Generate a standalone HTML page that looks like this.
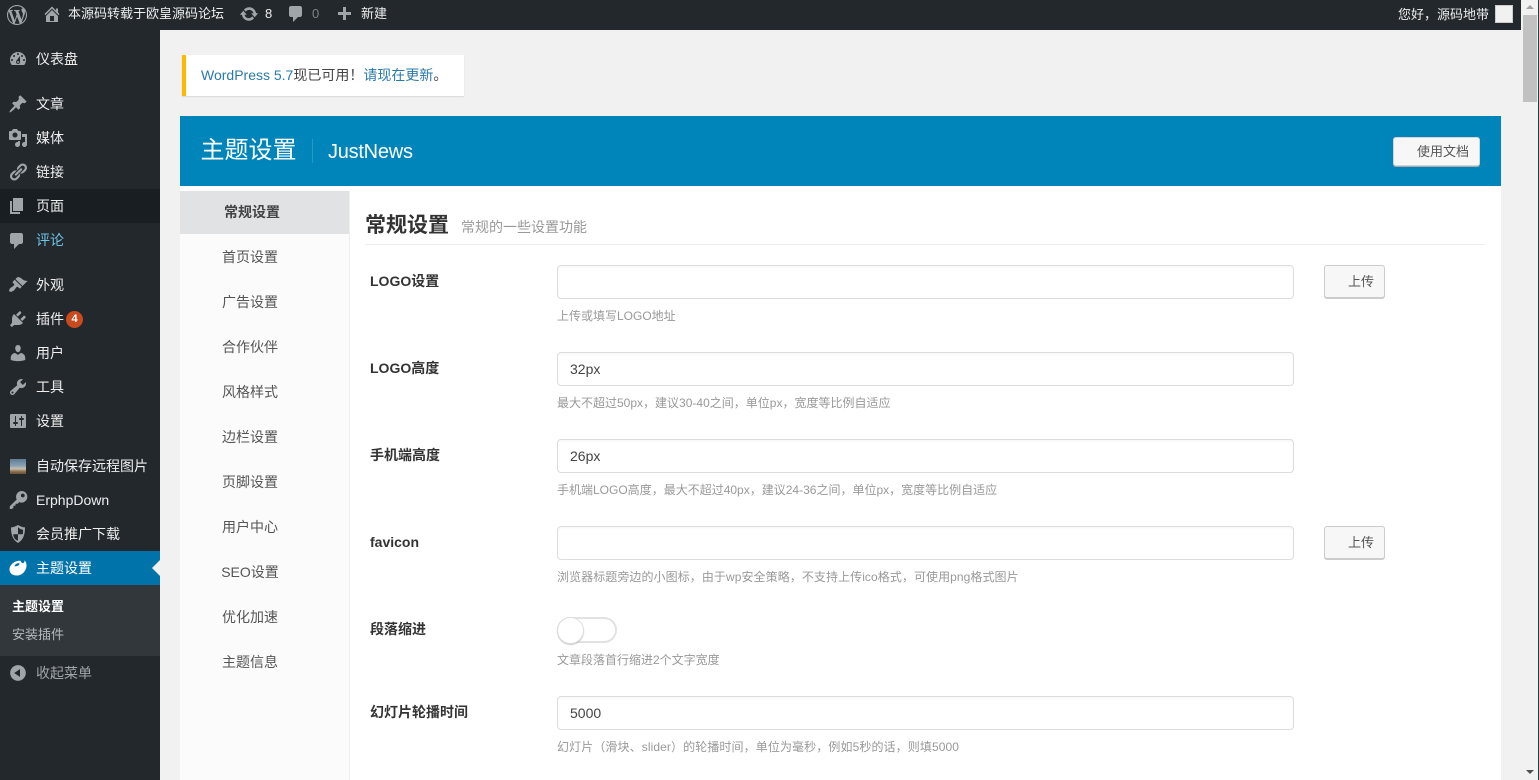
<!DOCTYPE html>
<html lang="zh-CN">
<head>
<meta charset="utf-8">
<title>主题设置</title>
<style>
html,body{margin:0;padding:0;width:1539px;height:780px;overflow:hidden;background:#f1f1f1}
body{position:relative;font-family:"Liberation Sans","Noto Sans CJK SC",sans-serif;font-size:14px;color:#444}
.b{position:absolute;box-sizing:border-box}
.t{position:absolute;white-space:nowrap;line-height:20px;height:20px}
.p{font-family:"Noto Sans CJK TC",sans-serif}
svg{position:absolute;display:block}
.m{color:#eee;left:36px;font-size:14px}
.i{fill:#a0a5aa}
.n{color:#555;font-size:14px;left:180px;width:140px;text-align:center}
.l{left:370px;font-weight:bold;color:#333;font-size:14px}
.h{left:557px;color:#999;font-size:12px}
.in{left:557px;width:737px;height:34px;background:#fff;border:1px solid #ddd;border-radius:4px;box-shadow:inset 0 1px 2px rgba(0,0,0,.04)}
.v{left:570px;color:#444;font-size:14px}
.up{left:1324px;width:61px;height:33px;background:#f7f7f7;border:1px solid #ccc;border-radius:3px;box-shadow:0 1px 0 #ccc}
.ut{left:1348px;color:#555;font-size:13px}
.a{color:#eee;font-size:13px}
</style>
</head>
<body>
<!-- admin bar -->
<div class="b" style="left:0;top:0;width:1521px;height:30px;background:#23282d"></div>
<svg class="i" style="left:7px;top:5px" width="20" height="20" viewBox="0 0 20 20"><path d="M20 10c0-5.51-4.49-10-10-10C4.48 0 0 4.49 0 10c0 5.52 4.48 10 10 10 5.51 0 10-4.48 10-10zM7.78 15.37L4.37 6.22c.55-.02 1.17-.08 1.17-.08.5-.06.44-1.13-.06-1.11 0 0-1.45.11-2.37.11-.18 0-.37 0-.58-.01C4.12 2.69 6.87 1.11 10 1.11c2.33 0 4.45.87 6.05 2.34-.68-.11-1.65.39-1.65 1.58 0 .74.45 1.36.9 2.1.35.61.55 1.36.55 2.46 0 1.49-1.4 5-1.4 5l-3.03-8.37c.54-.02.82-.17.82-.17.5-.05.44-1.25-.06-1.22 0 0-1.44.12-2.38.12-.87 0-2.33-.12-2.33-.12-.5-.03-.56 1.2-.06 1.22l.92.08 1.26 3.41zM17.41 10c.24-.64.74-1.87.43-4.25.7 1.29 1.05 2.71 1.05 4.25 0 3.29-1.73 6.24-4.4 7.78.97-2.59 1.94-5.2 2.92-7.78zM6.1 18.09C3.12 16.65 1.11 13.53 1.11 10c0-1.3.23-2.48.72-3.59C3.25 10.3 4.67 14.2 6.1 18.09zm4.03-6.63l2.58 6.98c-.86.29-1.76.45-2.71.45-.79 0-1.57-.11-2.29-.33.81-2.38 1.62-4.74 2.42-7.1z"/></svg>
<svg class="i" style="left:42px;top:4px" width="20" height="20" viewBox="0 0 20 20"><path d="M16 8.5l1.53 1.53-1.06 1.06L10 4.62l-6.47 6.47-1.06-1.06L10 2.5l4 4v-2h2v4zm-6-2.46l6 5.99V18H4v-5.97zM12 17v-5H8v5h4z"/></svg>
<div class="t a" style="left:68px;top:4px">本源码转载于欧皇源码论坛</div>
<svg class="i" style="left:239px;top:4px" width="20" height="20" viewBox="0 0 20 20"><path d="M10.2 3.28c3.53 0 6.43 2.61 6.92 6h2.08l-3.5 4-3.5-4h2.32c-.45-1.97-2.21-3.45-4.32-3.45-1.45 0-2.73.71-3.54 1.78L4.95 5.66C6.23 4.2 8.11 3.28 10.2 3.28zm-.4 13.44c-3.52 0-6.43-2.61-6.92-6H.8l3.5-4c1.17 1.33 2.33 2.67 3.5 4H5.48c.45 1.97 2.21 3.45 4.32 3.45 1.45 0 2.73-.71 3.54-1.78l1.71 1.95c-1.28 1.46-3.15 2.38-5.25 2.38z"/></svg>
<div class="t a" style="left:265px;top:4px">8</div>
<svg class="i" style="left:286px;top:4px" width="20" height="20" viewBox="0 0 20 20"><path d="M5 2h9c1.1 0 2 .9 2 2v7c0 1.1-.9 2-2 2h-2l-5 5v-5H5c-1.1 0-2-.9-2-2V4c0-1.1.9-2 2-2z"/></svg>
<div class="t a" style="left:312px;top:4px;color:#7d8388">0</div>
<svg class="i" style="left:334px;top:5px" width="20" height="20" viewBox="0 0 20 20"><path d="M17 7v3h-5v5H9v-5H4V7h5V2h3v5h5z"/></svg>
<div class="t a" style="left:361px;top:4px">新建</div>
<div class="t a" style="left:1398px;top:4px">您好<span class="p">，</span>源码地带</div>
<div class="b" style="left:1495px;top:5px;width:18px;height:18px;background:#f1f1f1;border:1px solid #ccc"></div>

<!-- scrollbar -->
<div class="b" style="left:1522px;top:0;width:17px;height:780px;background:#f1f1f1"></div>
<div class="b" style="left:1538px;top:0;width:1px;height:780px;background:#2b3a46"></div>
<div class="b" style="left:1523px;top:15px;width:14px;height:87px;background:#c1c1c1"></div>
<div class="b" style="left:1526px;top:5px;width:0;height:0;border-left:4px solid transparent;border-right:4px solid transparent;border-bottom:4px solid #a3a3a3"></div>
<div class="b" style="left:1526px;top:770px;width:0;height:0;border-left:4px solid transparent;border-right:4px solid transparent;border-top:4px solid #505050"></div>

<!-- sidebar -->
<div class="b" style="left:0;top:30px;width:160px;height:750px;background:#23282d"></div>
<div class="b" style="left:0;top:189px;width:160px;height:34px;background:#191e23"></div>
<div class="b" style="left:0;top:551px;width:160px;height:34px;background:#0073aa"></div>
<div class="b" style="left:0;top:585px;width:160px;height:71px;background:#32373c"></div>
<div class="b" style="left:152px;top:560px;width:0;height:0;border-top:8px solid transparent;border-bottom:8px solid transparent;border-right:8px solid #f1f1f1"></div>

<svg class="i" style="left:8px;top:49px" width="20" height="20" viewBox="0 0 20 20"><path d="M3.76 16h12.48c1.1-1.37 1.76-3.11 1.76-5 0-4.42-3.58-8-8-8s-8 3.58-8 8c0 1.89.66 3.63 1.76 5zM10 4c.55 0 1 .45 1 1s-.45 1-1 1-1-.45-1-1 .45-1 1-1zM6 6c.55 0 1 .45 1 1s-.45 1-1 1-1-.45-1-1 .45-1 1-1zm8 0c.55 0 1 .45 1 1s-.45 1-1 1-1-.45-1-1 .45-1 1-1zm-5.37 5.55L12 7v6c0 1.1-.9 2-2 2s-2-.9-2-2c0-.57.24-1.08.63-1.45zM4 10c.55 0 1 .45 1 1s-.45 1-1 1-1-.45-1-1 .45-1 1-1zm12 0c.55 0 1 .45 1 1s-.45 1-1 1-1-.45-1-1 .45-1 1-1zm-5 3c0-.55-.45-1-1-1s-1 .45-1 1 .45 1 1 1 1-.45 1-1z" fill-rule="evenodd"/></svg>
<div class="t m" style="top:49px">仪表盘</div>
<svg class="i" style="left:8px;top:94px" width="20" height="20" viewBox="0 0 20 20"><path d="M10.44 3.02l1.82-1.82 6.36 6.35-1.83 1.82c-1.05-.68-2.48-.57-3.41.36l-.75.75c-.92.93-1.04 2.35-.35 3.41l-1.83 1.82-2.41-2.41-2.8 2.79c-.42.42-3.38 2.71-3.8 2.29s1.86-3.39 2.28-3.81l2.79-2.79L4.1 9.36l1.83-1.82c1.05.69 2.48.57 3.4-.36l.75-.75c.93-.92 1.05-2.35.36-3.41z"/></svg>
<div class="t m" style="top:94px">文章</div>
<svg class="i" style="left:8px;top:128px" width="20" height="20" viewBox="0 0 20 20"><path d="M13 11V4c0-.55-.45-1-1-1h-1.67L9 1H5L3.67 3H2c-.55 0-1 .45-1 1v7c0 .55.45 1 1 1h10c.55 0 1-.45 1-1zM7 4.5c1.38 0 2.5 1.12 2.5 2.5S8.38 9.5 7 9.5 4.5 8.38 4.5 7 5.62 4.5 7 4.5zM14 6h5v10.5c0 1.38-1.12 2.5-2.5 2.5S14 17.88 14 16.5s1.12-2.5 2.5-2.5c.17 0 .34.02.5.05V9h-3V6zm-4 8.05V13h2v3.5c0 1.38-1.12 2.5-2.5 2.5S7 17.88 7 16.5 8.12 14 9.5 14c.17 0 .34.02.5.05z"/></svg>
<div class="t m" style="top:128px">媒体</div>
<svg class="i" style="left:8px;top:162px" width="20" height="20" viewBox="0 0 20 20"><path d="M17.74 2.76c1.68 1.69 1.68 4.41 0 6.1l-1.53 1.52c-1.12 1.12-2.7 1.47-4.14 1.09l2.62-2.61.76-.77.76-.76c.84-.84.84-2.2 0-3.04-.84-.85-2.2-.85-3.04 0l-.77.76-3.38 3.38c-.37-1.44-.02-3.02 1.1-4.14l1.52-1.53c1.69-1.68 4.42-1.68 6.1 0zM8.59 13.43l5.34-5.34c.42-.42.42-1.1 0-1.52-.44-.43-1.13-.39-1.53 0l-5.33 5.34c-.42.42-.42 1.1 0 1.52.44.43 1.13.39 1.52 0zm-.76 2.29l4.14-4.15c.38 1.44.03 3.02-1.09 4.14l-1.52 1.53c-1.69 1.68-4.41 1.68-6.1 0-1.68-1.68-1.68-4.42 0-6.1l1.53-1.52c1.12-1.12 2.7-1.47 4.14-1.1l-4.14 4.15c-.85.84-.85 2.2 0 3.05.84.84 2.2.84 3.04 0z"/></svg>
<div class="t m" style="top:162px">链接</div>
<svg class="i" style="left:7px;top:196px" width="20" height="20" viewBox="0 0 20 20"><path d="M6 15V2h10v13H6zm-1 1h8v2H3V5h2v11z"/></svg>
<div class="t m" style="top:196px">页面</div>
<svg class="i" style="left:7px;top:231px" width="20" height="20" viewBox="0 0 20 20"><path d="M5 2h9c1.1 0 2 .9 2 2v7c0 1.1-.9 2-2 2h-2l-5 5v-5H5c-1.1 0-2-.9-2-2V4c0-1.1.9-2 2-2z"/></svg>
<div class="t m" style="top:230px;color:#6fc3e5">评论</div>
<svg class="i" style="left:8px;top:275px" width="20" height="20" viewBox="0 0 20 20"><path d="M14.48 11.06L7.41 3.99l1.5-1.5c.5-.56 2.3-.47 3.51.32 1.21.8 1.43 1.28 2.91 2.1 1.18.64 2.45 1.26 4.45.85zm-.71.71L6.7 4.7 4.93 6.47c-.39.39-.39 1.02 0 1.41l1.06 1.06c.39.39.39 1.03 0 1.42-.6.6-1.43 1.11-2.21 1.69-.35.26-.7.53-1.01.84C1.43 13.23.78 15.78 1.5 16.5c.72.72 3.27.07 4.61-1.27.31-.31.58-.66.84-1.01.58-.78 1.09-1.61 1.69-2.21.39-.39 1.03-.39 1.42 0l1.06 1.06c.39.39 1.02.39 1.41 0z"/></svg>
<div class="t m" style="top:275px">外观</div>
<svg class="i" style="left:8px;top:309px" width="20" height="20" viewBox="0 0 20 20"><path d="M13.11 4.36L9.87 7.6 8 5.73l3.24-3.24c.35-.34 1.05-.2 1.56.32.52.51.66 1.21.31 1.55zm-8 1.77l.91-1.12 9.01 9.01-1.19.84c-.71.71-2.63 1.16-3.82 1.16H6.14L4.9 17.26c-.59.59-1.54.59-2.12 0-.59-.58-.59-1.53 0-2.12l1.24-1.24v-3.88c0-1.13.4-3.19 1.09-3.89zm7.26 3.97l3.24-3.24c.34-.35 1.04-.21 1.55.31.52.51.66 1.21.31 1.55l-3.24 3.25z"/></svg>
<div class="t m" style="top:309px">插件</div>
<div class="b" style="left:66px;top:311px;width:17px;height:17px;border-radius:50%;background:#ca4a1f;color:#fff;font-size:11px;font-weight:bold;line-height:17px;text-align:center">4</div>
<svg class="i" style="left:8px;top:343px" width="20" height="20" viewBox="0 0 20 20"><path d="M10 9.25c-2.27 0-2.73-3.44-2.73-3.44C7 4.02 7.82 2 9.97 2c2.16 0 2.98 2.02 2.71 3.81 0 0-.41 3.44-2.68 3.44zm0 2.57L12.72 10c2.39 0 4.52 2.33 4.52 4.53v2.49s-3.65 1.13-7.24 1.13c-3.65 0-7.24-1.13-7.24-1.13v-2.49c0-2.25 1.94-4.48 4.47-4.48z"/></svg>
<div class="t m" style="top:343px">用户</div>
<svg class="i" style="left:8px;top:377px" width="20" height="20" viewBox="0 0 20 20"><path d="M16.68 9.77c-1.34 1.34-3.3 1.67-4.95.99l-5.41 6.52c-.99.99-2.59.99-3.58 0s-.99-2.59 0-3.57l6.52-5.42c-.68-1.65-.35-3.61.99-4.95 1.28-1.28 3.12-1.62 4.72-1.06l-2.89 2.89 2.82 2.82 2.86-2.87c.53 1.58.18 3.39-1.08 4.65zM3.81 16.21c.4.39 1.04.39 1.43 0 .4-.4.4-1.04 0-1.43-.39-.4-1.03-.4-1.43 0-.39.39-.39 1.03 0 1.43z"/></svg>
<div class="t m" style="top:377px">工具</div>
<svg class="i" style="left:8px;top:411px" width="20" height="20" viewBox="0 0 20 20"><path d="M18 16V4c0-.55-.45-1-1-1H3c-.55 0-1 .45-1 1v12c0 .55.45 1 1 1h14c.55 0 1-.45 1-1zM8 11h1c.55 0 1 .45 1 1s-.45 1-1 1H8v1.5c0 .28-.22.5-.5.5s-.5-.22-.5-.5V13H6c-.55 0-1-.45-1-1s.45-1 1-1h1V5.5c0-.28.22-.5.5-.5s.5.22.5.5V11zm5-2h-1c-.55 0-1-.45-1-1s.45-1 1-1h1V5.5c0-.28.22-.5.5-.5s.5.22.5.5V7h1c.55 0 1 .45 1 1s-.45 1-1 1h-1v5.5c0 .28-.22.5-.5.5s-.5-.22-.5-.5V9z"/></svg>
<div class="t m" style="top:411px">设置</div>
<div class="b" style="left:10px;top:459px;width:16px;height:15px;background:linear-gradient(#5f7c96 0,#8aa0b2 45%,#c9c0ae 65%,#8a6a48 85%,#6b5238 100%)"></div>
<div class="t m" style="top:456px">自动保存远程图片</div>
<svg class="i" style="left:9px;top:490px" width="20" height="20" viewBox="0 0 20 20"><path fill-rule="evenodd" d="M12.5 1a5.8 5.8 0 1 1-2.3 11.1L8.6 13.7H6.5v2.1H4.4v2.1L2.6 19H.8v-2.8l6.9-6.7A5.8 5.8 0 0 1 12.5 1zm1.3 2.6a1.9 1.9 0 1 0 0 3.8 1.9 1.9 0 0 0 0-3.8z"/></svg>
<div class="t m" style="top:490px">ErphpDown</div>
<svg class="i" style="left:8px;top:524px" width="20" height="20" viewBox="0 0 20 20"><path fill-rule="evenodd" d="M10 1c2.6 1.6 4.8 2.3 7 2.4 0 7.2-1.6 12.4-7 15.6C4.600 15.800 3 10.600 3 3.400 5.200 3.300 7.400 2.600 10 1zm0 2.300v6.900H5.200c.3 3 1.600 5.400 4.800 6.500V10.200h4.800c.2-1.300.3-2.700.3-4.400-1.800-.2-3.400-1.100-5.100-2.500z"/></svg>
<div class="t m" style="top:524px">会员推广下载</div>
<svg style="left:8px;top:558px" width="20" height="20" viewBox="0 0 20 20"><path fill="#fff" fill-rule="evenodd" d="M12.500 2.800c.5 1.700 1.800 2.600 3 2.200 1-.4 1.200-1.700.9-2.800 1.400 1.100 2.100 3 2.100 5 0 5.500-4.300 10.300-9.800 10.300C4.500 17.500 1.500 15.200 1.500 11.500 1.500 6.700 7 2.200 12.500 2.800zM9 5.500 c-1.500.6-2.500 1.800-2.300 2.400.2.700 1.600.6 3-.1 1.200-.6 2-1.500 1.800-2.100-.2-.6-1.300-.7-2.500-.2z"/></svg>
<div class="t m" style="top:558px;color:#fff">主题设置</div>
<div class="t" style="left:12px;top:597px;font-size:13px;font-weight:bold;color:#fff">主题设置</div>
<div class="t" style="left:12px;top:625px;font-size:13px;color:#b4b9be">安装插件</div>
<svg class="i" style="left:8px;top:663px" width="20" height="20" viewBox="0 0 20 20"><path d="M10 2.160c4.330 0 7.840 3.510 7.840 7.840s-3.510 7.840-7.840 7.840S2.160 14.330 2.160 10 5.710 2.160 10 2.160zm2 11.720V6.120L6.180 9.970z"/></svg>
<div class="t" style="left:36px;top:663px;font-size:14px;color:#a0a5aa">收起菜单</div>

<!-- notice -->
<div class="b" style="left:182px;top:55px;width:282px;height:41px;background:#fff;border-left:4px solid #ffb900;box-shadow:0 1px 1px rgba(0,0,0,.1)"></div>
<div class="t" style="left:201px;top:65px;color:#444"><span style="color:#2a7aa8">WordPress 5.7</span>现已可用<span class="p">！</span><span style="color:#2a7aa8">请现在更新</span>。</div>

<!-- header -->
<div class="b" style="left:180px;top:116px;width:1321px;height:70px;background:#0085ba"></div>
<div class="t" style="left:200.500px;top:137px;height:28px;line-height:28px;font-size:24px;color:#fff">主题设置</div>
<div class="b" style="left:312px;top:139px;width:1px;height:24px;background:#2a98c5"></div>
<div class="t" style="left:328px;top:142px;font-size:20px;letter-spacing:-.25px;color:#fff">JustNews</div>
<div class="b" style="left:1393px;top:137px;width:87px;height:29px;background:#f7f7f7;border:1px solid #d5d5d5;border-radius:3px;box-shadow:0 1px 0 #aaa"></div>
<div class="t" style="left:1417px;top:142px;font-size:13px;color:#555">使用文档</div>

<!-- panel -->
<div class="b" style="left:180px;top:186px;width:1321px;height:594px;background:#fff"></div>
<div class="b" style="left:180px;top:191px;width:170px;height:589px;background:#fbfbfb;border-right:1px solid #eee"></div>
<div class="b" style="left:180px;top:191px;width:169px;height:43px;background:#e1e2e3"></div>
<div class="t n" style="top:202px;left:182px;font-weight:bold;color:#444">常规设置</div>
<div class="t n" style="top:247px">首页设置</div>
<div class="t n" style="top:292px">广告设置</div>
<div class="t n" style="top:337px">合作伙伴</div>
<div class="t n" style="top:382px">风格样式</div>
<div class="t n" style="top:427px">边栏设置</div>
<div class="t n" style="top:472px">页脚设置</div>
<div class="t n" style="top:517px">用户中心</div>
<div class="t n" style="top:562px">SEO设置</div>
<div class="t n" style="top:607px">优化加速</div>
<div class="t n" style="top:652px">主题信息</div>

<div class="t" style="left:365px;top:213px;height:26px;line-height:26px;font-size:21px;font-weight:bold;color:#333">常规设置</div>
<div class="t" style="left:461px;top:217px;font-size:14px;color:#999">常规的一些设置功能</div>
<div class="b" style="left:365px;top:244px;width:1120px;height:1px;background:#eee"></div>

<div class="t l" style="top:271px">LOGO设置</div>
<div class="b in" style="top:265px"></div>
<div class="b up" style="top:265px"></div>
<div class="t ut" style="top:272px">上传</div>
<div class="t h" style="top:306px">上传或填写LOGO地址</div>

<div class="t l" style="top:358px">LOGO高度</div>
<div class="b in" style="top:352px"></div>
<div class="t v" style="top:359px">32px</div>
<div class="t h" style="top:393px">最大不超过50px<span class="p">，</span>建议30-40之间<span class="p">，</span>单位px<span class="p">，</span>宽度等比例自适应</div>

<div class="t l" style="top:445px">手机端高度</div>
<div class="b in" style="top:439px"></div>
<div class="t v" style="top:446px">26px</div>
<div class="t h" style="top:480px">手机端LOGO高度<span class="p">，</span>最大不超过40px<span class="p">，</span>建议24-36之间<span class="p">，</span>单位px<span class="p">，</span>宽度等比例自适应</div>

<div class="t l" style="top:532px">favicon</div>
<div class="b in" style="top:526px"></div>
<div class="b up" style="top:526px"></div>
<div class="t ut" style="top:533px">上传</div>
<div class="t h" style="top:567px;letter-spacing:.07px">浏览器标题旁边的小图标<span class="p">，</span>由于wp安全策略<span class="p">，</span>不支持上传ico格式<span class="p">，</span>可使用png格式图片</div>

<div class="t l" style="top:619px">段落缩进</div>
<div class="b" style="left:557px;top:617px;width:60px;height:26px;border-radius:13px;background:#fff;border:2px solid #e2e2e2"></div>
<div class="b" style="left:557px;top:617px;width:27px;height:27px;border-radius:50%;background:#fff;border:1px solid #ddd;box-shadow:0 1px 1px rgba(0,0,0,.2)"></div>
<div class="t h" style="top:650px">文章段落首行缩进2个文字宽度</div>

<div class="t l" style="top:702px">幻灯片轮播时间</div>
<div class="b in" style="top:696px"></div>
<div class="t v" style="top:703px">5000</div>
<div class="t h" style="top:737px;letter-spacing:.1px">幻灯片<span class="p">（</span>滑块<span class="p">、</span>slider<span class="p">）</span>的轮播时间<span class="p">，</span>单位为毫秒<span class="p">，</span>例如5秒的话<span class="p">，</span>则填5000</div>
</body>
</html>
